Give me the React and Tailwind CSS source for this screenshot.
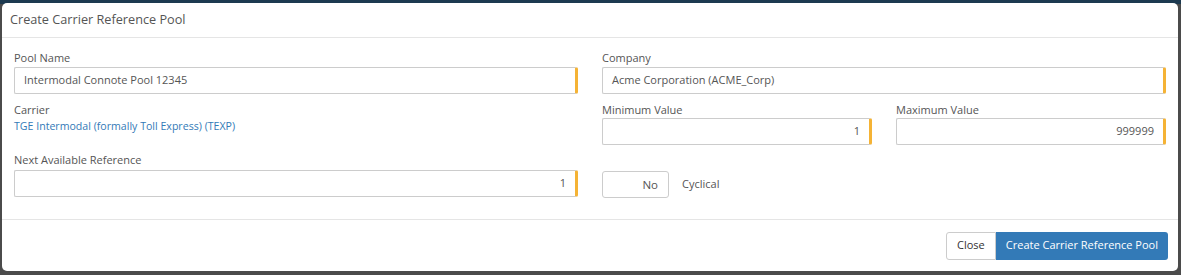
import React from "react";

const font = { fontFamily: '"Open Sans", "Noto Sans", sans-serif' };

function Field({ label, value, align = "left", className = "", mb = "mb-[1px]" }) {
  return (
    <div className={className}>
      <div className={`text-[11px] leading-[14px] text-[#555] ${mb}`}>{label}</div>
      <div
        className={`h-[27px] border border-[#ccc] border-r-[3px] border-r-[#f5b335] rounded-[2px] bg-white flex items-center px-[9px] text-[11px] text-[#555] ${
          align === "right" ? "justify-end" : ""
        }`}
      >
        {value}
      </div>
    </div>
  );
}

export default function App() {
  return (
    <div className="w-[1181px] h-[275px] bg-[#4b4b4b] relative overflow-hidden" style={font}>
      <div className="absolute inset-x-0 top-0 h-[4px] bg-[#1d3a50]" />
      <div className="absolute left-[2px] top-[3px] w-[1176px] h-[268px] bg-white rounded-[5px] flex flex-col">
        <div className="h-[35px] border-b border-[#e5e5e5] flex items-center px-[8px] text-[12.7px] text-[#555]">
          Create Carrier Reference Pool
        </div>
        <div className="flex-1 grid grid-cols-2 gap-x-[24px] px-[12px] pt-[13px]">
          <div className="flex flex-col">
            <Field label="Pool Name" value="Intermodal Connote Pool 12345" mb="mb-[2px]" />
            <div className="mt-[9px]">
              <div className="text-[11px] leading-[14px] text-[#555]">Carrier</div>
              <div className="text-[10.6px] leading-[14px] text-[#337ab7] mt-[2px]">
                TGE Intermodal (formally Toll Express) (TEXP)
              </div>
            </div>
            <Field className="mt-[20px]" mb="mb-[3px]" label="Next Available Reference" value="1" align="right" />
          </div>
          <div className="flex flex-col">
            <Field label="Company" value="Acme Corporation (ACME_Corp)" mb="mb-[2px]" />
            <div className="grid grid-cols-2 gap-x-[24px] mt-[9px]">
              <Field label="Minimum Value" value="1" align="right" />
              <Field label="Maximum Value" value="999999" align="right" />
            </div>
            <div className="flex items-center mt-[26px]">
              <div className="w-[67px] h-[27px] border border-[#ccc] rounded-[3px] flex items-center justify-end pr-[10px] text-[11.5px] text-[#555]">
                No
              </div>
              <div className="ml-[13px] text-[11px] text-[#555]">Cyclical</div>
            </div>
          </div>
        </div>
        <div className="h-[52px] border-t border-[#e5e5e5] flex items-center justify-end pr-[10px]">
          <div className="flex h-[28px]">
            <div className="px-[10px] border border-[#ccc] rounded-l-[3px] flex items-center text-[11px] text-[#333] bg-white">
              Close
            </div>
            <div className="px-[10px] bg-[#337ab7] rounded-r-[3px] flex items-center text-[11px] text-white">
              Create Carrier Reference Pool
            </div>
          </div>
        </div>
      </div>
    </div>
  );
}
